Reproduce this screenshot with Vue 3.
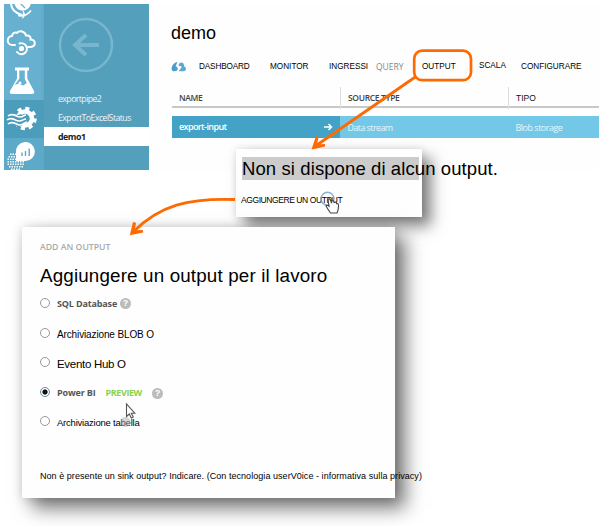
<script setup>
const pipelines = [
  { name: 'exportpipe2', cls: 'pipe' },
  { name: 'ExportToExcelStatus', cls: 'excel' },
  { name: 'demo1', cls: 'active' },
]
const tabs = [
  { label: 'DASHBOARD', cls: 'dash' },
  { label: 'MONITOR', cls: 'mon' },
  { label: 'INGRESSI', cls: 'ingr' },
  { label: 'QUERY', cls: 'query' },
  { label: 'OUTPUT', cls: 'out' },
  { label: 'SCALA', cls: 'scala' },
  { label: 'CONFIGURARE', cls: 'conf' },
]
const options = [
  { label: 'SQL Database', cls: 'sql', help: true },
  { label: 'Archiviazione BLOB O', cls: 'blob' },
  { label: 'Evento Hub O', cls: 'hub' },
  { label: 'Power BI', cls: 'pbi', checked: true, preview: true, help: true },
  { label: 'Archiviazione tabella', cls: 'tab' },
]
</script>

<template>
  <div class="page">
    <section class="portal">
      <div class="rail">
        <div class="tile t1">
          <svg width="40" height="19" viewBox="4 4 40 19" fill="none" stroke="#fff">
            <path d="M11 3c0 6 4 10 11 12" stroke-width="2" />
            <path d="M15 3c1 4 3 7 8 7 4-1 7-3 7-7" fill="#fff" stroke-width="1.500" />
            <path d="M20 3l5 5" stroke="#67b0d0" stroke-width="1.200" />
            <path d="M18 15.500c5 1 10-1 13-5" stroke-width="1.700" />
            <path d="M23 11l2 4-2.500 3.500" fill="#fff" stroke-width="1" />
          </svg>
        </div>
        <div class="tile t2">
          <svg width="40" height="40" viewBox="4 23 40 40" fill="none" stroke="#fff" stroke-width="2" stroke-linecap="round">
            <path d="M15 45h-2.500a4.500 4.500 0 0 1-.5-9c.5-3 3-4 5-3.200 2.500-3 8-1.300 9 2.700 4-.5 5 2 4.500 4 6 .5 5.500 7.500-.5 7.500H28" />
            <circle cx="21.500" cy="48.500" r="2.600" fill="#fff" stroke="none" />
            <path d="M19.500 43.500a5.500 5.500 0 1 1-2.500 8.500" />
          </svg>
        </div>
        <div class="tile t3">
          <svg width="40" height="37" viewBox="4 63 40 37">
            <path d="M15 67.500h14v3h-1.700v8L34 91q1 3-2 3H12q-3 0-2-3l7-12.500v-8h-2z" fill="#fff" />
            <path d="M19.300 70.500h5.500v8.500l2 4-3.500 2.500-5-1.800-3.500 1 4.500-6z" fill="#68b1d0" />
            <circle cx="20" cy="83" r="1.500" fill="#fff" />
          </svg>
        </div>
        <div class="tile t4">
          <svg width="40" height="38" viewBox="4 100 40 38">
            <g fill="none" stroke="#fff">
              <circle cx="25" cy="118.500" r="7" stroke-width="4.500" />
              <circle cx="25" cy="118.500" r="10" stroke-width="3.500" stroke-dasharray="4 3.854" />
            </g>
            <path d="M6 115c6-7 9 3 15-1l4 4-3 8H7z" fill="#4c9dbb" />
            <g fill="none" stroke="#fff" stroke-width="1.600">
              <path d="M8 116c5-4 8 1 12 1s3-2 6-2" />
              <path d="M7 120c5-4 8 1 12 1s4-2 7-2" />
              <path d="M8 124c5-4 8 1 12 1s4-3 7-3" />
            </g>
          </svg>
        </div>
        <div class="tile t5">
          <svg width="40" height="32" viewBox="4 138 40 32">
            <g stroke="#fff" stroke-width="1.500" stroke-dasharray="1.500 1">
              <path d="M10 154.200h6M8.500 156.700h8M7.500 159.200h9M7.500 161.700h17M7.500 164.200h17M9 166.700h14M11 169.200h10" />
            </g>
            <path d="M16 161v-8a9.500 9.500 0 1 1 9.500 8z" fill="#fff" />
            <path d="M22 156v-3.500M25.500 156v-5M29.200 156v-7.500" stroke="#5ca9c8" stroke-width="1.400" />
          </svg>
        </div>
      </div>
      <nav class="side">
        <svg class="back" width="56" height="56" viewBox="0 0 56 56" fill="none" stroke="#78b5ce">
          <circle cx="28" cy="28" r="26" stroke-width="2.500" />
          <path d="M41 28H18M28 18L17 28l11 10" stroke-width="4" />
        </svg>
        <div v-for="p in pipelines" :key="p.name" class="pipeline" :class="p.cls"><span>{{ p.name }}</span></div>
      </nav>
      <main class="main">
        <h1>demo</h1>
        <div class="tabs">
          <svg width="16" height="10" viewBox="0 0 16 10">
            <path d="M6.500 0Q2.500 .5 1 4.500-.5 9.200 3.500 9.300 6.800 9.300 6.800 6.500 6.500 4.500 4.600 4.300z" fill="#4b9dca" />
            <path d="M7.800 2.300Q8.500.5 10.500.6 13.300 1 13 4.200 15 5 15 7T13 9.300H7.600L10.500 5.500Q10.500 3.500 7.800 4.300z" fill="#5aa9d4" />
          </svg>
          <span v-for="t in tabs" :key="t.label" :class="t.cls">{{ t.label }}</span>
        </div>
        <div class="row head">
          <div><span class="name">NAME</span></div>
          <div><span class="source">SOURCE TYPE</span></div>
          <div><span class="tipo">TIPO</span></div>
        </div>
        <div class="row data">
          <div class="first">
            <span class="exp">export-input</span>
            <svg width="9" height="8" viewBox="0 0 9 8" fill="none" stroke="#fff" stroke-width="1.500"><path d="M0 4h7.500M4.500 1l3 3-3 3" /></svg>
          </div>
          <div><span class="stream">Data stream</span></div>
          <div><span class="storage">Blob storage</span></div>
        </div>
      </main>
    </section>

    <section class="window empty">
      <div class="mark"><span>Non si dispone di alcun output.</span></div>
      <div class="add"><span>AGGIUNGERE UN OUTPUT</span></div>
    </section>

    <section class="window dialog">
      <div class="caption"><span>ADD AN OUTPUT</span></div>
      <h2><span>Aggiungere un output per il lavoro</span></h2>
      <div v-for="o in options" :key="o.label" class="option" :class="o.cls">
        <i class="radio" :class="{ on: o.checked }"></i>
        <span class="label">{{ o.label }}</span>
        <span v-if="o.preview" class="preview">PREVIEW</span>
        <b v-if="o.help" class="help">?</b>
      </div>
      <p><span>Non è presente un sink output? Indicare. (Con tecnologia userV0ice - informativa sulla privacy)</span></p>
    </section>

    <svg class="overlay" width="601" height="526" viewBox="0 0 601 526" fill="none">
      <g stroke="#ff6a00">
        <rect x="414.200" y="50.700" width="56.800" height="29.500" rx="8" stroke-width="2.700" />
        <path d="M416 76.500L314 147" stroke-width="2.800" />
        <path d="M235 199.500C188 198 160 205 133 232" stroke-width="2.800" />
      </g>
      <path d="M311.500 149.500l4.500-13.500 2.500 1-1.500 7.500 8-.5v2.500z" fill="#ff6a00" />
      <path d="M129.800 235.200l3.200-13.200 3 .7-1.200 7.500 8-.3.300 2.700z" fill="#ff6a00" />
      <circle cx="327.500" cy="198.800" r="6.500" stroke="#6f9fc3" stroke-width="1.500" opacity=".8" />
      <path d="M328 199.500q1.500-1.500 2.500.5l1 3v-2.500l2 .5.7 1.500 1.800-.5.8 1.800q2-.7 1.700 2.200 0 4-1.500 7h-6.500q-2.500-3.500-4.500-7 .5-1.500 3 .3z" fill="#fff" fill-opacity=".8" stroke="#444" stroke-width="1.100" />
      <circle cx="125.500" cy="422" r="5" fill="#aaa" opacity=".5" />
      <path d="M126.500 404v12.500l2.800-2.500 2 4 2-1-2-3.800h3.500z" fill="#fff" stroke="#555" stroke-width="1.100" />
    </svg>
  </div>
</template>

<style>
body { margin: 0; background: #fff; }
</style>
<style scoped>
.page { position: relative; width: 601px; height: 526px; overflow: hidden; box-sizing: border-box; padding: 4px 0 0 4px; background: #fff; font-family: "Liberation Sans", sans-serif; color: #000; }
span { white-space: nowrap; }
.portal { display: grid; grid-template-columns: 40px 105px 450px; height: 166px; }
.rail { background: linear-gradient(90deg, #67b0d0 90%, #62a9c7); overflow: hidden; }
.tile svg { display: block; }
.t4 { background: #4c9dbb; }
.t5 { background: #5ca9c8; }
.side { background: #549fbc; display: flex; flex-direction: column; }
.back { margin: 12.500px 0 16.500px 13.500px; flex: none; }
.pipeline { height: 19px; padding-left: 14px; font: 8.800px/21px "Open Sans", sans-serif; color: #e9f5fa; }
.pipe { letter-spacing: -.6px; }
.excel { letter-spacing: -.56px; }
.pipeline.active { background: #fff; color: #222; font-weight: 700; line-height: 20px; letter-spacing: -.45px; }
.main { padding-left: 22px; background: #fefefe; }
h1 { font-size: 18px; font-weight: 400; line-height: 22px; margin: 18px 0 14px; }
.tabs { display: grid; grid-template-columns: 28px 71px 59px 47px 46px 57px 42px 70px; height: 17px; align-items: center; font-size: 8.200px; line-height: 17px; }
.dash { letter-spacing: -.15px; }
.query { color: #888; font-family: "Open Sans", sans-serif; font-size: 8.500px; }
.scala { margin-top: -2px; }
.row { display: grid; grid-template-columns: 168px 168px 91px; margin-left: 1px; }
.head { height: 19px; margin-top: 12px; border-bottom: 2px solid #c8c8c8; font: 600 8.500px/22px "Open Sans", sans-serif; color: #444; }
.head > div { padding-left: 7px; }
.head > div + div { border-left: 1px solid #ddd; }
.name, .source { letter-spacing: -.35px; }
.tipo { font: 8.500px/22px "Liberation Sans", sans-serif; color: #111; }
.data { height: 22px; margin-top: 8px; background: #73c8e7; font: 9px/24px "Open Sans", sans-serif; color: #e4f6fc; }
.data > div { padding-left: 7px; height: 22px; box-sizing: border-box; }
.data > div + div { padding-left: 7.500px; }
.data .first { background: #43a2c5; color: #fff; display: flex; justify-content: space-between; align-items: center; padding-right: 7px; font-weight: 600; }
.exp, .stream { letter-spacing: -.6px; }
.storage { letter-spacing: -.5px; }
.window { position: absolute; box-sizing: border-box; background: #fefefe; }
.empty { left: 236px; top: 149px; width: 186px; height: 68px; padding: 8px 0 0 6px; box-shadow: 9px 9px 14px rgba(0, 0, 0, .5), 0 0 8px rgba(0, 0, 0, .12); }
.mark { width: 177px; height: 23px; background: #ccc; font-size: 18.500px; line-height: 23px; letter-spacing: .1px; }
.add { margin: 15px 0 0 -1px; font-size: 8.500px; line-height: 10px; letter-spacing: -.42px; }
.dialog { left: 22px; top: 227px; width: 373px; height: 271px; padding: 14px 0 0 18px; box-shadow: 10px 10px 18px rgba(0, 0, 0, .55), 0 0 10px rgba(0, 0, 0, .15); }
.caption { font: 600 8.700px/12px "Open Sans", sans-serif; color: #aaa; }
h2 { margin: 10px 0 9px; font-size: 18.800px; font-weight: 400; line-height: 26px; letter-spacing: .16px; }
.option { height: 29.600px; display: flex; align-items: flex-start; font-size: 10px; line-height: 12px; box-sizing: border-box; }
.radio { box-sizing: border-box; width: 10px; height: 10px; border: 1.500px solid #999; border-radius: 50%; margin: 0 7px 0 0; background: #fff; flex: none; }
.radio.on { border-color: #5c8ca5; background: radial-gradient(circle, #111 2.200px, #fff 3px); }
.blob .label, .hub .label { padding-top: 1px; letter-spacing: -.13px; }
.hub .label { font-size: 11.500px; letter-spacing: -.3px; }
.tab .label { padding-top: 1px; font-size: 9.500px; letter-spacing: -.22px; }
.sql .label, .pbi .label { font: 700 9px/12px "Open Sans", sans-serif; letter-spacing: -.15px; color: #555; }
.preview { margin-left: 10px; font: 700 9px/12px "Open Sans", sans-serif; letter-spacing: -.4px; color: #8bd14b; }
.help { margin-left: 3px; width: 11px; height: 11px; border-radius: 50%; background: #bbb; color: #fff; font-size: 9px; line-height: 11px; text-align: center; }
.pbi .help { margin-left: 10px; margin-top: 1px; }
p { margin: 24px 0 0; font-size: 9px; line-height: 12px; letter-spacing: .05px; }
.overlay { position: absolute; left: 0; top: 0; pointer-events: none; }
</style>
